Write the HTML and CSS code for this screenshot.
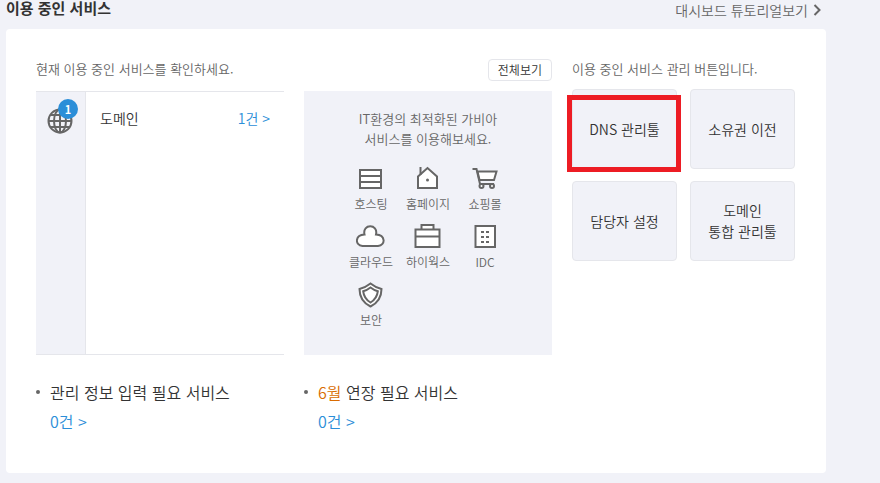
FILE: index.html
```html
<!DOCTYPE html>
<html lang="ko">

<head>
  <meta charset="UTF-8">
  <meta name="viewport" content="width=device-width, initial-scale=1.0">
  <title>이용 중인 서비스</title>
  <link rel="stylesheet" href="styles.css">
</head>

<body>
  <main class="dashboard">
    <header class="header">
      <h1>이용 중인 서비스</h1>
      <a class="tutorial" href="#">대시보드 튜토리얼보기
        <svg width="8" height="12" viewBox="0 0 8 12"><path d="M1.5 1l5 5-5 5"/></svg>
      </a>
    </header>

    <div class="panel">
      <section class="column">
        <div class="column-head">
          <p>현재 이용 중인 서비스를 확인하세요.</p>
        </div>
        <div class="service">
          <div class="service-tab">
            <span class="globe">
              <svg width="26" height="26" viewBox="0 0 26 26">
                <circle cx="13" cy="13" r="11.5"/>
                <ellipse cx="13" cy="13" rx="6" ry="11.5"/>
                <path d="M13 1.5v23M1.5 13h23M4 7h18M4 19h18"/>
              </svg>
              <b class="badge">1</b>
            </span>
          </div>
          <div class="service-row">
            <span>도메인</span>
            <a href="#">1건 &gt;</a>
          </div>
        </div>
        <div class="notice">
          <h2>관리 정보 입력 필요 서비스</h2>
          <a href="#">0건 &gt;</a>
        </div>
      </section>

      <section class="column">
        <div class="column-head">
          <button class="view-all" type="button">전체보기</button>
        </div>
        <div class="promo">
          <p>IT환경의 최적화된 가비아<br>서비스를 이용해보세요.</p>
          <nav class="promo-links">
            <a href="#">
              <svg width="30" height="30" viewBox="0 0 30 30"><path class="fill" d="M4 6h21v18H4zM4 12h21M4 18h21"/></svg>
              호스팅
            </a>
            <a href="#">
              <svg width="30" height="30" viewBox="0 0 30 30"><path class="fill" d="M5 24V12.500L14.500 4l9.500 8.500V24z"/><path d="M7.500 11V3"/><circle class="dot" cx="14.500" cy="16" r="1.500"/></svg>
              홈페이지
            </a>
            <a href="#">
              <svg width="30" height="30" viewBox="0 0 30 30"><path class="fill" d="M7.500 7.500h19l-2.500 8.500H9.500z"/><path d="M2.500 5h4l3.500 15h14"/><circle class="fill" cx="11.500" cy="22" r="2"/><circle class="fill" cx="22" cy="22" r="2"/></svg>
              쇼핑몰
            </a>
            <a href="#">
              <svg width="30" height="30" viewBox="0 0 30 30"><path class="fill" d="M6.500 24C-1.500 23-1 13 8.500 12.500c-2.500-11 14-11 11.500 0 9.500.5 10 10.500 2 11.500z"/></svg>
              클라우드
            </a>
            <a href="#">
              <svg width="30" height="30" viewBox="0 0 30 30"><path class="fill" d="M8.500 7.500V3h12v4.500M2.500 7.500h24V25h-24zM2.500 14.500h24"/></svg>
              하이웍스
            </a>
            <a href="#">
              <svg width="30" height="30" viewBox="0 0 30 30"><path class="fill" d="M5.500 4H25v21H5.500z"/><path class="windows" d="M12.500 9v12M17.500 9v12"/></svg>
              IDC
            </a>
            <a href="#">
              <svg width="30" height="30" viewBox="0 0 30 30"><path class="fill" d="M14.500 3.500q5 4 11 5.500 0 12-11 17.500Q3.500 21 3.500 9q6-1.500 11-5.500z"/><path d="M14.500 7.500q3.500 2.700 7.300 3.800-.8 7.200-7.300 11.200-6.500-4-7.300-11.200 3.800-1.100 7.300-3.800z"/></svg>
              보안
            </a>
          </nav>
        </div>
        <div class="notice">
          <h2><em>6월</em> 연장 필요 서비스</h2>
          <a href="#">0건 &gt;</a>
        </div>
      </section>

      <section class="column">
        <div class="column-head">
          <p>이용 중인 서비스 관리 버튼입니다.</p>
        </div>
        <div class="tools">
          <button class="marked" type="button">DNS 관리툴</button>
          <button type="button">소유권 이전</button>
          <button type="button">담당자 설정</button>
          <button type="button">도메인<br>통합 관리툴</button>
        </div>
      </section>
    </div>
  </main>
</body>

</html>
```

FILE: styles.css
```css
* {
  box-sizing: border-box;
}

body {
  margin: 0;
  background: #f1f2f8;
  color: #333;
  font-family: "Noto Sans CJK KR", sans-serif;
  font-size: 14px;
  font-weight: 350;
  line-height: 20px;
}

h1,
h2,
p {
  margin: 0;
}

a {
  color: #2b8ed8;
  text-decoration: none;
}

button {
  border: 1px solid #e5e6eb;
  border-radius: 4px;
  color: #333;
  font: inherit;
  cursor: pointer;
}

svg {
  fill: none;
  stroke: #666;
  stroke-width: 2;
}

.fill {
  fill: #fff;
}

.dashboard {
  max-width: 832px;
  padding: 0 6px 10px;
}

.header {
  display: flex;
  justify-content: space-between;
  align-items: flex-start;
  height: 29px;
}

.header h1 {
  font-size: 15px;
  font-weight: 700;
  line-height: 16px;
}

.tutorial {
  display: flex;
  align-items: center;
  gap: 5px;
  padding-right: 5px;
  color: #666;
}

.panel {
  display: grid;
  grid-template-columns: 1fr 1fr 224px;
  gap: 20px;
  padding: 30px 30px 42px;
  border-radius: 4px;
  background: #fff;
}

.column-head {
  display: flex;
  justify-content: space-between;
  height: 32px;
  color: #666;
  font-size: 13px;
}

.view-all {
  height: 22px;
  margin-left: auto;
  padding: 0 9px;
  background: #fff;
  font-size: 12px;
  line-height: 20px;
}

/* service list */
.service {
  display: flex;
  height: 264px;
  border: solid #e5e6eb;
  border-width: 1px 0;
}

.service-tab {
  width: 50px;
  padding: 16px 11px;
  border-right: 1px solid #e5e6eb;
  background: #f1f2f8;
}

.globe {
  display: block;
  position: relative;
}

.globe svg {
  display: block;
}

.badge {
  position: absolute;
  top: -9px;
  left: 11px;
  width: 20px;
  height: 20px;
  border-radius: 50%;
  background: #2b8ed8;
  color: #fff;
  font-size: 11px;
  font-weight: 700;
  text-align: center;
}

.service-row {
  display: flex;
  flex: 1;
  justify-content: space-between;
  padding: 16px 14px;
}

/* recommended services */
.promo {
  height: 264px;
  padding: 18px 37px;
  background: #f1f2f8;
  color: #666;
  font-size: 13px;
  text-align: center;
}

.promo-links {
  display: grid;
  grid-template-columns: repeat(3, 57px);
  justify-content: center;
  gap: 9px 0;
  margin-top: 15px;
}

.promo-links a {
  display: flex;
  flex-direction: column;
  align-items: center;
  gap: 1px;
  color: #666;
  font-size: 12px;
  line-height: 18px;
}

.dot {
  fill: #666;
  stroke: none;
}

.windows {
  stroke-width: 3;
  stroke-dasharray: 2 3;
}

/* things that need attention */
.notice {
  position: relative;
  margin-top: 25px;
  padding-left: 14px;
  font-size: 16px;
}

.notice::before {
  content: "";
  position: absolute;
  top: 10px;
  left: 0;
  width: 4px;
  height: 4px;
  border-radius: 50%;
  background: #666;
}

.notice h2 {
  margin-bottom: 7px;
  font-size: 16px;
  font-weight: 350;
  line-height: 24px;
}

.notice em {
  color: #d96c00;
  font-style: normal;
}

.tools {
  display: grid;
  grid-template-columns: 105px 105px;
  gap: 12px 13px;
  margin-top: -2px;
}

.tools button {
  position: relative;
  height: 80px;
  padding: 0;
  background: #f1f2f8;
  line-height: 21px;
}

.marked::after {
  content: "";
  position: absolute;
  top: 5px;
  right: -5px;
  bottom: -4px;
  left: -6px;
  border: 5px solid #ed1c24;
}
```
